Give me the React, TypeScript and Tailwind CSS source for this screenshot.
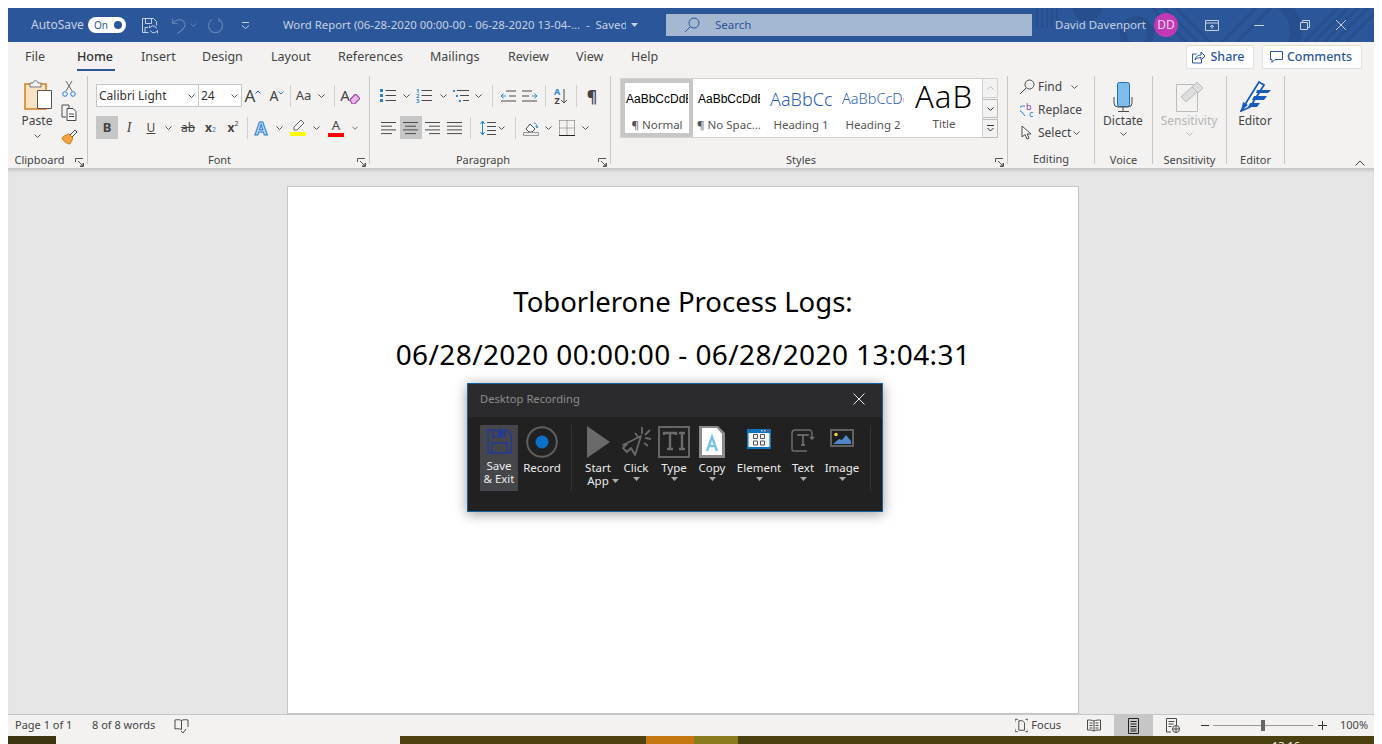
import React from "react";

const S = "#4a4a4a";
const Chev = ({ c = "#555" }: { c?: string }) => (
  <svg width="7" height="4" viewBox="0 0 7 4"><path d="M.5.5l3 3 3-3" fill="none" stroke={c} /></svg>
);
const Cell = ({ className = "", children }: { className?: string; children?: React.ReactNode }) => (
  <div className={`flex shrink-0 items-center justify-center ${className}`}>{children}</div>
);
const Sep = () => <div className="h-[22px] w-px shrink-0 bg-[#d2d0ce]" />;
const Ic = ({ w = 18, h = 18, children }: { w?: number; h?: number; children: React.ReactNode }) => (
  <svg width={w} height={h} viewBox={`0 0 ${w} ${h}`} fill="none">{children}</svg>
);
const Launcher = () => (
  <svg width="9" height="9" viewBox="0 0 9 9" fill="none" stroke="#555"><path d="M8.5 5v3.500H5M.5 4V.5H8M3 3l5 5M5 8h3V5" /></svg>
);
const Group = ({ className, label, launcher, children, labelClass = "" }: { className: string; label: string; launcher?: boolean; children: React.ReactNode; labelClass?: string }) => (
  <div className={`relative h-[88px] shrink-0 border-r border-[#c6c6c6] ${className}`}>
    <div className="h-[79px]">{children}</div>
    <div className={`h-[9px] text-center text-[11px] leading-[9px] text-[#444] ${labelClass}`}>{label}</div>
    {launcher && <div className="absolute bottom-[-3px] right-[3px] leading-none"><Launcher /></div>}
  </div>
);
const Lines = ({ xs, w = 16 }: { xs: [number, number][]; w?: number }) => (
  <Ic w={w} h={14}>{xs.map(([a, b], i) => <path key={i} d={`M${a} ${1.5 + i * 3.7}H${b}`} stroke={S} />)}</Ic>
);

const tabs: [string, string][] = [
  ["File", "w-[52px] pl-[0px]"], ["Home", "w-[64px]"], ["Insert", "w-[61px]"], ["Design", "w-[69px]"],
  ["Layout", "w-[67px]"], ["References", "w-[92px]"], ["Mailings", "w-[78px]"], ["Review", "w-[68px]"], ["View", "w-[55px]"], ["Help", "w-[40px]"],
];

const TitlePattern = () => (
  <svg className="absolute right-0 top-0" width="342" height="34" viewBox="0 0 342 34" fill="none" stroke="#274f8d">
    {[5, 10, 15, 20, 25].map((x) => <path key={x} d={`M${x} 0V20`} strokeWidth="2" />)}
    <circle cx="55" cy="0" r="14" fill="#274f8d" />
    <circle cx="105" cy="26" r="14" strokeWidth="7" />
    <path d="M120 0l34 34M132 0l34 34M144 0l34 34" strokeWidth="3" />
    <path d="M250 -4c14 12 18 28 10 42" strokeWidth="12" />
    <path d="M190 34L224 0M205 34L239 0" strokeWidth="3" />
    <path d="M272 34l34-34M282 34l34-34M292 34l34-34M302 34l34-34M314 34l28-28" strokeWidth="3" />
  </svg>
);

const TitleBar = () => (
  <div className="relative flex h-[34px] shrink-0 items-center bg-[#2b579a] text-[12px] text-[#c5d1e4]">
    <TitlePattern />
    <div className="relative flex h-full w-full items-center">
      <span className="ml-[23px] w-[57px] shrink-0 whitespace-nowrap">AutoSave</span>
      <div className="flex h-[16px] w-[38px] shrink-0 items-center justify-between rounded-full bg-white pl-[6px] pr-[4px] text-[10px] text-[#2b579a]">
        <span>On</span><span className="h-[8px] w-[8px] rounded-full bg-[#2b579a]" />
      </div>
      <div className="ml-[15px] w-[16px] shrink-0">
        <Ic w={17} h={17}><path d="M1.500 1.500h11l3 3v4M1.500 1.500v14h6M4.500 1.500v5h6v-5M4 15.500v-5h3" stroke="#c5d1e4" /><path d="M15.500 11.500a3.500 3.500 0 0 0-6-1.500l-1 1V8.500M9.500 13.500a3.500 3.500 0 0 0 6 1l1-1v3" stroke="#c5d1e4" /></Ic>
      </div>
      <div className="ml-[14px] w-[16px] shrink-0">
        <Ic w={17} h={17}><path d="M1.500 1.500v5h5M1.500 6.500c3-3 7-5 10-3s3 6 1 8-3 3-6 5" stroke="#5f80b3" strokeWidth="1.200" /></Ic>
      </div>
      <div className="ml-[3px] w-[10px] shrink-0"><Chev c="#5f80b3" /></div>
      <div className="ml-[7px] w-[17px] shrink-0">
        <Ic w={17} h={17}><path d="M12 2.500a7 7 0 1 1-7 0M12 1v3h3" stroke="#5f80b3" strokeWidth="1.200" /></Ic>
      </div>
      <div className="ml-[17px] w-[10px] shrink-0">
        <svg width="9" height="9" viewBox="0 0 9 9" fill="none" stroke="#c5d1e4"><path d="M1 1.500h7M1 4.500l3.500 3 3.500-3" /></svg>
      </div>
      <span className="ml-[32px] w-[343px] shrink-0 overflow-hidden whitespace-nowrap text-[11.400px]">Word Report (06-28-2020 00:00-00 - 06-28-2020 13-04-...&nbsp; -&nbsp; Saved</span>
      <div className="ml-[5px] w-[8px] shrink-0"><svg width="7" height="4"><path d="M0 0h7L3.500 4z" fill="#c5d1e4" /></svg></div>
      <div className="ml-[27px] flex h-[22px] w-[366px] shrink-0 items-center bg-[#a5b8d2] text-[#2b579a]">
        <div className="ml-[18px] w-[31px]"><Ic w={16} h={16}><circle cx="10" cy="6" r="5" stroke="#2b579a" /><path d="M6.500 9.500L1 15" stroke="#2b579a" /></Ic></div>
        <span className="text-[11.500px]">Search</span>
      </div>
      <span className="ml-[23px] w-[99px] shrink-0 whitespace-nowrap text-[11.500px]">David Davenport</span>
      <div className="flex h-[24px] w-[24px] shrink-0 items-center justify-center rounded-full bg-[#c239b3] text-[12px] text-[#f3d5f0]">DD</div>
      <div className="ml-[27px] flex w-[16px] shrink-0">
        <Ic w={14} h={11}><path d="M.5.500h13v10H.5zM.5 3h13M7 9V5M5 7l2-2 2 2" stroke="#c5d1e4" /></Ic>
      </div>
      <div className="ml-[33px] w-[30px] shrink-0"><svg width="10" height="1"><path d="M0 .5h10" stroke="#c5d1e4" /></svg></div>
      <div className="ml-[16px] w-[34px] shrink-0"><Ic w={10} h={10}><path d="M.5 2.500h7v7h-7zM2.500 2.500v-2h7v7h-2" stroke="#c5d1e4" /></Ic></div>
      <div className="ml-[2px] w-[10px] shrink-0"><Ic w={10} h={10}><path d="M0 0l10 10M10 0L0 10" stroke="#c5d1e4" /></Ic></div>
    </div>
  </div>
);

const TabRow = () => (
  <div className="flex h-[34px] shrink-0 items-start bg-[#f3f2f1] pl-[17px] text-[12.500px] text-[#444]">
    {tabs.map(([t, w]) => (
      <div key={t} className={`flex h-[30px] shrink-0 items-center ${w}`}>
        <div className="relative">
          <span className={t === "Home" ? "font-medium text-[#333]" : ""}>{t}</span>
          {t === "Home" && <div className="absolute bottom-[-5px] left-0 h-[2px] w-[38px] bg-[#2b579a]" />}
        </div>
      </div>
    ))}
    <div className="ml-[515px] mt-[3px] flex h-[24px] w-[68px] shrink-0 items-center justify-center gap-[4px] rounded-[2px] border border-[#e1dfdd] bg-white pr-[4px] font-medium text-[#2b579a]">
      <Ic w={15} h={14}><path d="M5.500 4H1.500v9h9V9" stroke="#2b579a" /><path d="M4 10c0-3 3-5 6-5V2l4 4-4 4V7.500C8 7.500 5.500 8 4 10z" stroke="#2b579a" /></Ic>
      <span>Share</span>
    </div>
    <div className="ml-[8px] mt-[3px] flex h-[24px] w-[100px] shrink-0 items-center justify-center gap-[4px] rounded-[2px] border border-[#e1dfdd] bg-white pr-[2px] font-medium text-[#2b579a]">
      <Ic w={13} h={12}><path d="M.5.500h12v8H5l-3 3v-3H.5z" stroke="#2b579a" /></Ic>
      <span>Comments</span>
    </div>
  </div>
);

const Clipboard = () => (
  <div className="flex">
    <div className="ml-[7px] flex w-[44px] flex-col items-center pt-[4px]">
      <svg className="ml-[4px]" width="30" height="32" viewBox="0 0 30 32" fill="none">
        <path d="M1 4h21v25H1z" fill="#f7e3c2" stroke="#d67f1e" strokeWidth="1.500" />
        <path d="M6 3h3c0-3 5-3 5 0h3v4H6z" fill="#f3f2f1" stroke="#777" />
        <path d="M13.500 10.500h14v18h-14z" fill="#fff" stroke="#555" />
      </svg>
      <span className="mt-[1px] text-[12px] leading-[16px] text-[#444]">Paste</span>
      <div className="mt-[5px] leading-none"><Chev /></div>
    </div>
    <div className="ml-[1px] flex w-[18px] flex-col items-center pt-[2px]">
      <Cell className="h-[21px]"><Ic w={14} h={17}><path d="M4 1l6 10M10 1L4 11" stroke="#666" /><circle cx="3" cy="14" r="2.300" stroke="#2b7cd3" /><circle cx="11" cy="14" r="2.300" stroke="#2b7cd3" /></Ic></Cell>
      <Cell className="mt-[3px] h-[21px]"><Ic w={17} h={17}><path d="M1 1h7v3M1 1v12h4" stroke={S} /><path d="M6 4.500h6l3 3v9H6z" stroke={S} fill="#fff" /><path d="M8 10h5M8 12.500h5" stroke={S} /></Ic></Cell>
      <Cell className="mt-[3px] h-[21px]"><Ic w={17} h={16}><path d="M9 6l5-5 2 2-5 5z" fill="#fff" stroke={S} /><path d="M3 7l5-2 4 4-3 6c-3 0-7-3-8-6z" fill="#f4a340" stroke="#d67f1e" /></Ic></Cell>
    </div>
  </div>
);

const AIcon = ({ bar }: { bar: string }) => (
  <div className="flex w-[16px] flex-col items-center">
    <span className="text-[13px] leading-[13px] text-[#444]">A</span>
    <div className={`mt-[1px] h-[4px] w-[16px] ${bar}`} />
  </div>
);

const FontGroup = () => (
  <div className="pl-[8px] pt-[8px] text-[#444]">
    <div className="flex h-[23px] items-center">
      <div className="flex h-[23px] w-[103px] items-center justify-between border border-[#c6c6c6] bg-white pl-[2px] pr-[3px] text-[12px]"><span className="whitespace-nowrap text-[#333]">Calibri Light</span><Chev /></div>
      <div className="flex h-[23px] w-[43px] items-center justify-between border border-l-0 border-[#c6c6c6] bg-white pl-[2px] pr-[3px] text-[12px]"><span className="text-[#333]">24</span><Chev /></div>
      <Cell className="w-[22px]"><span className="text-[17px] leading-none">A</span><svg className="mb-[7px]" width="6" height="4"><path d="M.5 3.500L3 1l2.500 2.500" stroke="#2b579a" fill="none" /></svg></Cell>
      <Cell className="w-[26px]"><span className="text-[14px] leading-none">A</span><svg className="mb-[6px]" width="6" height="4"><path d="M.5.500l2.500 2.500 2.500-2.500" stroke="#2b88d8" fill="none" /></svg></Cell>
      <Sep />
      <Cell className="w-[25px] gap-[2px]"><span className="text-[13px]">Aa</span></Cell>
      <Cell className="w-[10px]"><Chev /></Cell>
      <div className="ml-[8px]"><Sep /></div>
      <Cell className="w-[30px]"><span className="text-[15px] leading-none">A</span>
        <svg width="10" height="10" className="mt-[6px]" viewBox="0 0 9 9"><path d="M0 5l5-5 4 4-5 5H2z" fill="#e8b6e6" stroke="#a03ea0" /></svg></Cell>
    </div>
    <div className="mt-[9px] flex h-[23px] items-center">
      <Cell className="h-[23px] w-[22px] bg-[#c6c6c6] text-[13px] font-bold">B</Cell>
      <Cell className="w-[22px] font-['Liberation_Serif',serif] text-[14px] italic">I</Cell>
      <Cell className="w-[22px] text-[12px] underline">U</Cell>
      <Cell className="w-[12px]"><Chev /></Cell>
      <Cell className="w-[28px] text-[12px] line-through">ab</Cell>
      <Cell className="w-[17px] font-bold text-[12px]">x<span className="mt-[6px] text-[7px] font-normal text-[#2b88d8]">2</span></Cell>
      <Cell className="w-[28px] font-bold text-[12px]">x<span className="mb-[6px] text-[7px] font-normal">2</span></Cell>
      <Sep />
      <Cell className="w-[26px] text-[18px] font-bold leading-none text-[#bcdcf4] [-webkit-text-stroke:1px_#2b7cd3]">A</Cell>
      <Cell className="w-[10px]"><Chev /></Cell>
      <Cell className="w-[28px]">
        <div className="flex w-[16px] flex-col items-center">
          <Ic w={14} h={12}><path d="M3 8l7-7 3 3-7 7H3z" stroke="#666" fill="#fff" /></Ic>
          <div className="mt-[1px] h-[4px] w-[16px] bg-[#ffff00]" />
        </div>
      </Cell>
      <Cell className="w-[8px]"><Chev /></Cell>
      <Cell className="w-[32px]"><AIcon bar="bg-[#ff0000]" /></Cell>
      <Cell className="w-[6px]"><Chev /></Cell>
    </div>
  </div>
);

const Bullets = ({ nums }: { nums?: boolean }) => (
  <Ic w={16} h={14}>
    {[1.500, 6.500, 11.500].map((y, i) => (
      <g key={y}>
        {nums ? <text x="0" y={y + 2} fontSize="6" fontWeight="700" fill="#2b88d8">{i + 1}</text> : <rect x="0" y={y - 1.500} width="3" height="3" fill="#2b7cd3" />}
        <path d={`M5.500 ${y}H16`} stroke={S} />
      </g>
    ))}
  </Ic>
);

const Paragraph = () => (
  <div className="pl-[8px] pt-[8px] text-[#444]">
    <div className="flex h-[23px] items-center">
      <Cell className="w-[20px]"><Bullets /></Cell>
      <Cell className="w-[16px]"><Chev /></Cell>
      <Cell className="w-[20px]"><Bullets nums /></Cell>
      <Cell className="w-[18px]"><Chev /></Cell>
      <Cell className="w-[18px]"><Ic w={16} h={14}><rect x="0" y="1" width="2" height="2" fill="#2b88d8" /><rect x="3" y="6" width="2" height="2" fill="#2b88d8" /><rect x="6" y="11" width="2" height="2" fill="#2b88d8" /><path d="M4 1.500h12M7 6.500h9M10 11.500h6" stroke={S} /></Ic></Cell>
      <Cell className="w-[16px]"><Chev /></Cell>
      <div className="ml-[6px]"><Sep /></div>
      <Cell className="ml-[4px] w-[22px]"><Ic w={16} h={12}><path d="M6 1h10M9 6h7M1 11h15" stroke={S} /><path d="M6 6H1M3.500 3.500L1 6l2.500 2.500" stroke="#2b88d8" /></Ic></Cell>
      <Cell className="w-[22px]"><Ic w={16} h={12}><path d="M0 1h10M0 6h7M0 11h15" stroke={S} /><path d="M10 6h5M12.500 3.500L15 6l-2.500 2.500" stroke="#2b88d8" /></Ic></Cell>
      <div className="ml-[4px]"><Sep /></div>
      <Cell className="ml-[4px] w-[22px]">
        <div className="flex flex-col items-center text-[9px] font-bold leading-[9px]"><span className="text-[#2b88d8]">A</span><span>Z</span></div>
        <Ic w={8} h={16}><path d="M4 1v14M1 12l3 3 3-3" stroke={S} /></Ic>
      </Cell>
      <div className="ml-[4px]"><Sep /></div>
      <Cell className="ml-[4px] w-[22px] text-[16px] font-bold">¶</Cell>
    </div>
    <div className="mt-[9px] flex h-[23px] items-center">
      <Cell className="w-[22px]"><Lines xs={[[0, 15], [0, 11], [0, 15], [0, 11]]} /></Cell>
      <Cell className="h-[23px] w-[22px] bg-[#c6c6c6]"><Lines xs={[[0, 15], [2, 13], [0, 15], [2, 13]]} /></Cell>
      <Cell className="w-[22px]"><Lines xs={[[0, 15], [4, 15], [0, 15], [4, 15]]} /></Cell>
      <Cell className="w-[22px]"><Lines xs={[[0, 15], [0, 15], [0, 15], [0, 15]]} /></Cell>
      <div className="ml-[4px]"><Sep /></div>
      <Cell className="ml-[8px] w-[18px]"><Ic w={16} h={16}><path d="M2.500 1v14M0.500 4l2-3 2 3M0.500 12l2 3 2-3" stroke="#2b88d8" /><path d="M7 2.500h9M7 6.500h9M7 10.500h9M7 14.500h9" stroke={S} /></Ic></Cell>
      <Cell className="w-[8px]"><Chev /></Cell>
      <div className="ml-[10px]"><Sep /></div>
      <Cell className="ml-[4px] w-[22px]"><Ic w={16} h={16}><path d="M3 9l4-5 5 5-3 3H6z" stroke={S} fill="#fff" /><path d="M11 3c2 0 3 2 3 4M12.500 6l1.500 2 1-2" stroke="#2b88d8" /><path d="M.5 12.500h15v3H.5z" stroke="#999" fill="#eee" /></Ic></Cell>
      <Cell className="w-[12px]"><Chev /></Cell>
      <Cell className="ml-[2px] w-[22px]"><Ic w={16} h={16}><path d="M.5 .5h15M.5 8h15M8 .5v15M.5 .5v15M15.500 .5v15" stroke="#666" strokeDasharray="1 1" /><path d="M0 15.500h16" stroke="#222" /></Ic></Cell>
      <Cell className="w-[14px]"><Chev /></Cell>
    </div>
  </div>
);

const StyleCard = ({ sample, label, sampleClass, selected }: { sample: string; label: string; sampleClass: string; selected?: boolean }) => (
  <div className={`flex h-full w-[72px] shrink-0 flex-col items-center overflow-hidden ${selected ? "border-[4px] border-[#c6c6c6]" : "border-[4px] border-white"}`}>
    <div className="flex h-[32px] w-full items-center justify-center overflow-hidden px-[1px]">
      <span className={`block w-full overflow-hidden whitespace-nowrap ${sampleClass}`}>{sample}</span>
    </div>
    <span className="mt-[2px] whitespace-nowrap text-[11.500px] leading-[16px] text-[#555]">{label}</span>
  </div>
);

const Styles = () => (
  <div className="flex pl-[9px] pt-[2px]">
    <div className="flex h-[60px] w-[363px] border border-[#d2d0ce] bg-white">
      <StyleCard selected sample="AaBbCcDdEe" label="¶ Normal" sampleClass="font-['Liberation_Sans',sans-serif] text-[12px] text-black" />
      <StyleCard sample="AaBbCcDdEe" label="¶ No Spac..." sampleClass="font-['Liberation_Sans',sans-serif] text-[12px] text-black" />
      <StyleCard sample="AaBbCcDd" label="Heading 1" sampleClass="text-[18px] font-light text-[#2f5fb3]" />
      <StyleCard sample="AaBbCcDdE" label="Heading 2" sampleClass="text-[14.500px] font-light text-[#2f5fb3]" />
      <div className="flex h-full w-[70px] shrink-0 flex-col items-center overflow-hidden">
        <div className="mt-[5px] flex h-[32px] items-start overflow-hidden">
          <span className="mt-[-7px] whitespace-nowrap text-[31px] font-light leading-[38px] tracking-[1px] text-black">AaB</span>
        </div>
        <span className="mt-[0px] text-[11.500px] leading-[16px] text-[#555]">Title</span>
      </div>
    </div>
    <div className="flex h-[60px] w-[15px] flex-col gap-[1px]">
      <Cell className="h-[20px] border border-l-0 border-[#d2d0ce]"><svg width="7" height="4"><path d="M.5 3.500l3-3 3 3" stroke="#bbb" fill="none" /></svg></Cell>
      <Cell className="h-[19px] border border-l-0 border-[#bdbdbd]"><Chev c="#333" /></Cell>
      <Cell className="h-[19px] border border-l-0 border-[#bdbdbd]"><svg width="7" height="7"><path d="M0 .5h7M.5 3l3 3 3-3" stroke="#333" fill="none" /></svg></Cell>
    </div>
  </div>
);

const Editing = () => (
  <div className="mt-[-1px] flex flex-col pl-[10px] text-[12px] text-[#444]">
    <div className="flex h-[23px] items-center">
      <Cell className="w-[18px]"><Ic w={16} h={16}><circle cx="10.500" cy="5.500" r="4.500" stroke={S} /><path d="M7 9l-6 6" stroke={S} /></Ic></Cell>
      <span className="ml-[2px] w-[33px]">Find</span><Chev />
    </div>
    <div className="flex h-[23px] items-center">
      <Cell className="w-[18px]"><Ic w={15} h={16}><path d="M5 4H3a3 3 0 0 0-1 6l3 4" stroke="#2b88d8" /><text x="6" y="8" fontSize="9" fill="#a03ea0">b</text><text x="9" y="15" fontSize="9" fill="#2b88d8">c</text></Ic></Cell>
      <span className="ml-[2px]">Replace</span>
    </div>
    <div className="flex h-[23px] items-center">
      <Cell className="w-[18px]"><Ic w={12} h={15}><path d="M1 1v11l3-2.500 2 4.500 2-1-2-4h4z" stroke={S} fill="#fff" /></Ic></Cell>
      <span className="ml-[2px] w-[35px]">Select</span><Chev />
    </div>
  </div>
);

const BigBtn = ({ icon, label, chev = true, dim }: { icon: React.ReactNode; label: string; chev?: boolean; dim?: boolean }) => (
  <div className={`flex flex-col items-center pr-[1px] ${dim ? "text-[#b5b5b5]" : "text-[#444]"}`}>
    <div className="flex h-[36px] items-end">{icon}</div>
    <span className="text-[12px] leading-[18px]">{label}</span>
    {chev && <div className="mt-[2px] leading-none"><Chev c={dim ? "#bbb" : "#555"} /></div>}
  </div>
);

const Ribbon = () => (
  <div className="relative flex h-[92px] shrink-0 bg-[#f3f2f1]">
    <Group className="w-[80px]" label="Clipboard" labelClass="pr-[16px]" launcher><Clipboard /></Group>
    <Group className="w-[282px]" label="Font" labelClass="pr-[18px]" launcher><FontGroup /></Group>
    <Group className="w-[241px]" label="Paragraph" labelClass="pr-[14px]" launcher><Paragraph /></Group>
    <Group className="w-[397px]" label="Styles" labelClass="pr-[16px]" launcher><Styles /></Group>
    <Group className="w-[87px]" label="Editing"><Editing /></Group>
    <Group className="w-[58px]" label="Voice">
      <BigBtn label="Dictate" icon={<Ic w={20} h={30}><rect x="4.500" y=".5" width="12" height="24" rx="2" fill="#7fbcee" stroke="#1e6fb8" /><path d="M1 15v6a4 4 0 0 0 4 4h10a4 4 0 0 0 4-4v-6M10 25v4M5 29.500h11" stroke={S} /></Ic>} />
    </Group>
    <Group className="w-[74px]" label="Sensitivity">
      <BigBtn dim label="Sensitivity" icon={<Ic w={29} h={31}><path d="M1.500 3.500h21v27h-21z" stroke="#bbb" /><path d="M6 16L18 5l5 5-12 11z" fill="#ddd" stroke="#bbb" /><path d="M17 6l5-5 6 6-5 5z" fill="#ddd" stroke="#bbb" /></Ic>} />
    </Group>
    <Group className="w-[58px]" label="Editor">
      <BigBtn chev={false} label="Editor" icon={<Ic w={31} h={31}><path d="M1 30L19 1l5 3L10 26z" fill="#fff" stroke="#185abd" strokeWidth="1.800" /><path d="M1 30l2-9 5 3z" fill="#185abd" /><path d="M17 9h14l-3 3H16zM14 15h13l-3 4H12zM10 22h10l-3 4H8z" fill="#185abd" /></Ic>} />
    </Group>
    <div className="absolute bottom-[2px] right-[9px] leading-none">
      <svg width="10" height="6"><path d="M.5 5.500L5 1l4.500 4.500" stroke="#444" fill="none" /></svg>
    </div>
  </div>
);

type RecItem = { label: React.ReactNode; w: string; pb: string; icon: React.ReactNode; caret?: boolean; active?: boolean };

const Caret = () => <svg width="7" height="4"><path d="M0 0h7L3.500 4z" fill="#aaa" /></svg>;

const recItems: RecItem[] = [
  { label: <>Save<br />&amp; Exit</>, w: "w-[38px]", pb: "pb-[5px]", active: true, icon: <Ic w={25} h={25}><path d="M1 1h19l4 4v19H1z" stroke="#24399a" strokeWidth="1.500" /><path d="M6 1v7h12V1" stroke="#24399a" strokeWidth="1.500" /><path d="M11 2h5v5h-5z" fill="#24399a" /><path d="M5 24V14h15v10" stroke="#24399a" strokeWidth="1.500" /></Ic> },
  { label: "Record", w: "ml-[5px] w-[38px]", pb: "pb-[1px]", icon: <Ic w={32} h={32}><circle cx="16" cy="16" r="14.800" stroke="#5e5e5e" strokeWidth="2" /><circle cx="16" cy="16" r="6.500" fill="#0a70c8" /></Ic> },
  { label: <span className="relative">Start<br />App<span className="absolute bottom-[5px] left-[27px] leading-none"><Caret /></span></span>, w: "ml-[8px] w-[36px]", pb: "pb-[1px]", icon: <Ic w={24} h={32}><path d="M1 0l23 16L1 32z" fill="#6a6a6a" /></Ic> },
  { label: "Click", w: "ml-[2px] w-[36px]", pb: "pb-[1px]", caret: true, icon: <Ic w={30} h={32}><path d="M2 19L20 10l-6 19-4-7-4 4-4-4 4-4z" stroke="#6a6a6a" strokeWidth="1.800" strokeLinejoin="round" /><path d="M14 7l3 4M21 1v7M29 4l-5 5M30 13l-6-1M27 20l-4-3" stroke="#6a6a6a" strokeWidth="1.800" /></Ic> },
  { label: "Type", w: "ml-[2px] w-[36px]", pb: "pb-[1px]", caret: true, icon: <Ic w={32} h={32}><path d="M1 1h30v30H1z" stroke="#666" strokeWidth="2" /><path d="M6 9V7h12v2M12 7v16M9 23h6M21 7h6M24 7v16M21 23h6" stroke="#6c6c6c" strokeWidth="2.400" /></Ic> },
  { label: "Copy", w: "ml-[2px] w-[36px]", pb: "pb-[1px]", caret: true, icon: <svg width="26" height="32" viewBox="0 0 26 32"><path d="M0 0h19l7 7v25H0z" fill="#8a8a8a" /><path d="M3 2h15l5 6v21H3z" fill="#fff" /><path d="M8 25l5-14 5 14M10 20h6" stroke="#7cc0ec" strokeWidth="2.500" fill="none" /></svg> },
  { label: "Element", w: "ml-[3px] w-[52px]", pb: "pb-[8px]", caret: true, icon: <svg width="24" height="24" viewBox="0 0 24 24"><rect width="24" height="20" y="2" fill="#0d74bd" /><rect x="1.500" y="6" width="21" height="14" fill="#f4f4f4" /><rect x="14" y="3" width="1.500" height="1.500" fill="#ccc" /><rect x="17" y="3" width="1.500" height="1.500" fill="#ccc" /><rect x="20" y="3" width="1.500" height="1.500" fill="#e03030" /><path d="M6.500 7.500h4v4h-4zM13.500 7.500h4v4h-4zM6.500 14h4v4h-4zM13.500 14h4v4h-4z" stroke="#555" fill="none" /></svg> },
  { label: "Text", w: "ml-[2px] w-[32px]", pb: "pb-[7px]", caret: true, icon: <Ic w={25} h={24}><path d="M16 2H4a3 3 0 0 0-3 3v16a2 2 0 0 0 2 2h13" stroke="#6c6c6c" strokeWidth="1.500" /><path d="M7 8V7h10v1M12 7v10M10 17h4" stroke="#7a7a7a" strokeWidth="1.500" /><path d="M16 2h2c2 0 3 2 3 4v5M19 9l2 2 2-2" stroke="#6c6c6c" strokeWidth="1.500" /></Ic> },
  { label: "Image", w: "ml-[4px] w-[38px]", pb: "pb-[11px]", caret: true, icon: <svg width="24" height="20" viewBox="0 0 24 20"><rect width="24" height="18" y="1" fill="#626262" /><rect x="2" y="3" width="20" height="14" fill="#1d1d1d" /><circle cx="6" cy="6.500" r="1.800" fill="#f3cc4e" /><path d="M3 16l6-5 3 1 4-5 5 6v3z" fill="#4f86c6" /></svg> },
];

const RecBtn = ({ it }: { it: RecItem }) => (
  <div className={`flex h-[66px] shrink-0 flex-col items-center ${it.w} ${it.active ? "bg-[#45464a]" : ""}`}>
    <div className={`flex h-[34px] w-full items-end justify-center ${it.pb}`}>{it.icon}</div>
    <div className={`whitespace-nowrap text-center text-[11.500px] leading-[13px] text-[#ececec] ${it.active ? "mt-[0px]" : "mt-[2px]"}`}>{it.label}</div>
    {it.caret && <div className="mt-[3px] leading-none"><Caret /></div>}
  </div>
);

const Recording = () => (
  <div className="absolute left-[459px] top-[375px] flex h-[129px] w-[416px] flex-col border border-[#13629f] bg-[#212121] shadow-[0_2px_12px_rgba(0,0,0,0.4)]">
    <div className="flex h-[33px] shrink-0 items-center justify-between bg-[#2b2b2d] pl-[12px] pr-[17px]">
      <span className="mt-[-2px] text-[11.200px] text-[#8c8c8c]">Desktop Recording</span>
      <div className="mt-[-3px] leading-none"><Ic w={12} h={12}><path d="M.5.500l11 11M11.500.5l-11 11" stroke="#e8e8e8" /></Ic></div>
    </div>
    <div className="flex pl-[12px] pt-[8px]">
      <RecBtn it={recItems[0]} />
      <RecBtn it={recItems[1]} />
      <div className="ml-[10px] h-[66px] w-px bg-[#333]" />
      {recItems.slice(2).map((it, i) => <RecBtn key={i} it={it} />)}
      <div className="ml-[9px] h-[66px] w-px bg-[#333]" />
    </div>
  </div>
);

const StatusBar = () => (
  <div className="flex h-[22px] shrink-0 items-center border-t border-[#c6c6c6] bg-[#f3f2f1] pl-[7px] text-[11px] text-[#444]">
    <span className="w-[77px] shrink-0 whitespace-nowrap">Page 1 of 1</span>
    <span className="w-[82px] shrink-0 whitespace-nowrap">8 of 8 words</span>
    <Ic w={15} h={15}><path d="M7.500 2.500C6 1.500 3 1.500 1 2v9c2-.5 4-.5 6.500.5V2.500c1.500-1 4.500-1 6.500-.5v7M7 13l2 2 3-4" stroke={S} /></Ic>
    <div className="ml-[826px] flex h-full w-[46px] shrink-0 items-center justify-between">
      <Ic w={14} h={15}><path d="M0 4V1h3M11 1h3v3M0 11v3h3M11 14h3v-3M4 2.500h4l2 2v8H4z" stroke={S} /></Ic>
      <span className="ml-[3px]">Focus</span>
    </div>
    <Cell className="ml-[25px] w-[16px]"><Ic w={14} h={13}><path d="M7 2c-2-1-4-1-6.500-1v10c2.500 0 4.500 0 6.500 1 2-1 4-1 6.500-1V1C11 1 9 1 7 2zM7 2v10M2.500 4h3M2.500 6.500h3M2.500 9h3M8.500 4h3M8.500 6.500h3M8.500 9h3" stroke={S} /></Ic></Cell>
    <Cell className="ml-[12px] h-full w-[39px] bg-[#c6c6c6]"><Ic w={11} h={16}><path d="M.5.500h10v15H.5zM2.500 3.500h6M2.500 6h6M2.500 8.500h6M2.500 11h6M2.500 13h6" stroke="#222" /></Ic></Cell>
    <Cell className="ml-[12px] w-[16px]"><Ic w={14} h={15}><path d="M.5 .5h10V7M5 14H.5V.5M2.500 3.500h6M2.500 6h5M2.500 8.500h3" stroke={S} /><circle cx="10" cy="11" r="3.500" stroke={S} /><path d="M6.500 11h7M10 7.500v7" stroke={S} /></Ic></Cell>
    <Cell className="ml-[20px] w-[8px]"><svg width="8" height="1"><path d="M0 .5h8" stroke="#333" /></svg></Cell>
    <div className="relative ml-[4px] flex h-[10px] w-[100px] shrink-0 items-center">
      <div className="h-px w-full bg-[#999]" />
      <div className="absolute left-[48px] h-[11px] w-[4px] bg-[#666]" />
    </div>
    <Cell className="ml-[5px] w-[9px]"><Ic w={9} h={9}><path d="M0 4.500h9M4.500 0v9" stroke="#333" /></Ic></Cell>
    <span className="ml-[13px] whitespace-nowrap">100%</span>
  </div>
);

const Taskbar = () => (
  <div className="flex h-[8px] shrink-0 overflow-hidden bg-[#4a4010]">
    <div className="w-[48px] shrink-0 bg-[#3c3410]" />
    <div className="w-[344px] shrink-0 bg-[#f3f2ee]" />
    <div className="w-[246px] shrink-0 bg-[#50420f]" />
    <div className="w-[48px] shrink-0 bg-[#c4770f]" />
    <div className="w-[44px] shrink-0 bg-[#8a7c1c]" />
    <div className="ml-[534px] pt-[4px] text-[11px] leading-[11px] text-white">13:16</div>
  </div>
);

export default function App() {
  return (
    <div className="h-[744px] w-[1382px] overflow-hidden bg-white pl-[8px] pt-[8px] font-['Noto_Sans',sans-serif]">
      <div className="relative flex h-[736px] w-[1366px] flex-col">
        <TitleBar />
        <TabRow />
        <Ribbon />
        <div className="flex min-h-0 flex-1 justify-center overflow-hidden bg-[#e6e6e6] pt-[18px] shadow-[inset_0_5px_4px_-3px_rgba(0,0,0,0.18)]">
          <div className="ml-[-16px] w-[792px] shrink-0 border border-[#c6c6c6] bg-white pt-[92px] text-center text-black">
            <p className="text-[27.500px] leading-[46px]">Toborlerone Process Logs:</p>
            <p className="mt-[6px] text-[28px] leading-[46px] tracking-[0.4px]">06/28/2020 00:00:00 - 06/28/2020 13:04:31</p>
          </div>
        </div>
        <StatusBar />
        <Taskbar />
        <Recording />
      </div>
    </div>
  );
}
